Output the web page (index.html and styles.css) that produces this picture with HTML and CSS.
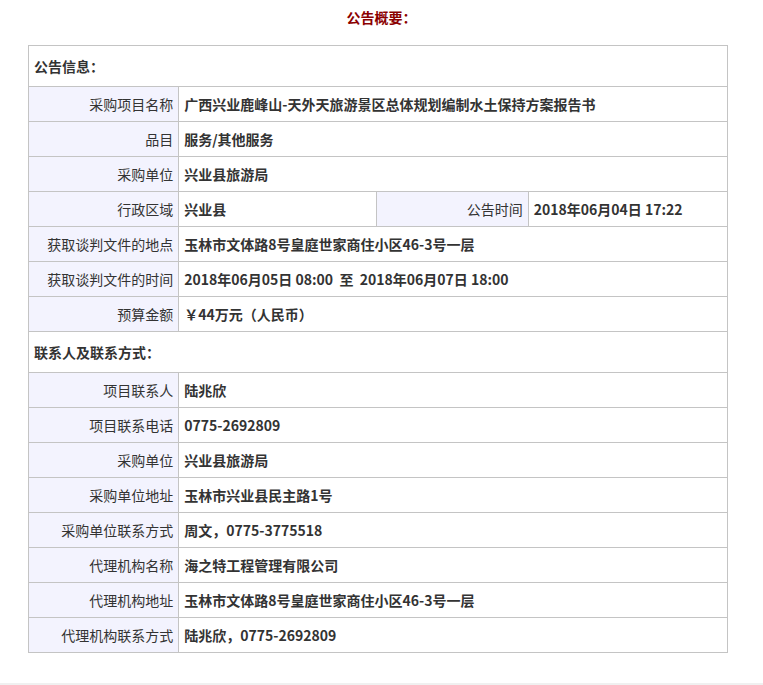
FILE: index.html
```html
<!DOCTYPE html>
<html lang="zh-CN">
<head>
<meta charset="utf-8">
<title>公告概要</title>
<link rel="stylesheet" href="styles.css">
</head>
<body>
<div class="page">
  <h2 class="title">公告概要：</h2>
  <table class="info">
    <colgroup>
      <col class="c1"><col class="c2"><col class="c3"><col class="c4">
    </colgroup>
    <tr class="sec"><td colspan="4">公告信息：</td></tr>
    <tr><th>采购项目名称</th><td colspan="3">广西兴业鹿峰山-天外天旅游景区总体规划编制水土保持方案报告书</td></tr>
    <tr><th>品目</th><td colspan="3">服务/其他服务</td></tr>
    <tr><th>采购单位</th><td colspan="3">兴业县旅游局</td></tr>
    <tr><th>行政区域</th><td>兴业县</td><th>公告时间</th><td>2018年06月04日 17:22</td></tr>
    <tr><th>获取谈判文件的地点</th><td colspan="3">玉林市文体路8号皇庭世家商住小区46-3号一层</td></tr>
    <tr><th>获取谈判文件的时间</th><td colspan="3">2018年06月05日 08:00&nbsp;&nbsp;至&nbsp;&nbsp;2018年06月07日 18:00</td></tr>
    <tr><th>预算金额</th><td colspan="3">￥44万元（人民币）</td></tr>
    <tr class="sec"><td colspan="4">联系人及联系方式：</td></tr>
    <tr><th>项目联系人</th><td colspan="3">陆兆欣</td></tr>
    <tr><th>项目联系电话</th><td colspan="3">0775-2692809</td></tr>
    <tr><th>采购单位</th><td colspan="3">兴业县旅游局</td></tr>
    <tr><th>采购单位地址</th><td colspan="3">玉林市兴业县民主路1号</td></tr>
    <tr><th>采购单位联系方式</th><td colspan="3">周文，0775-3775518</td></tr>
    <tr><th>代理机构名称</th><td colspan="3">海之特工程管理有限公司</td></tr>
    <tr><th>代理机构地址</th><td colspan="3">玉林市文体路8号皇庭世家商住小区46-3号一层</td></tr>
    <tr><th>代理机构联系方式</th><td colspan="3">陆兆欣，0775-2692809</td></tr>
  </table>
</div>
<div class="footer"></div>
</body>
</html>
```
FILE: styles.css
```css
html, body {
  margin: 0;
  padding: 0;
  background: #fff;
}
body {
  font-family: "Noto Sans CJK SC", "Microsoft YaHei", sans-serif;
  font-size: 14px;
  color: #333;
}
.page {
  height: 683px;
  padding-top: 7px;
  box-sizing: border-box;
}
.title {
  margin: 0;
  height: 38px;
  line-height: 20px;
  text-align: center;
  font-size: 14px;
  font-weight: bold;
  color: #8b0000;
}
.info {
  margin-left: 28px;
  width: 700px;
  border-collapse: collapse;
  table-layout: fixed;
}
.c1 { width: 150px; }
.c2 { width: 198px; }
.c3 { width: 151px; }
.c4 { width: 199px; }
.info th, .info td {
  border: 1px solid #c4c4c4;
  height: 35px;
  padding: 0 5px;
  box-sizing: border-box;
  line-height: 20px;
  white-space: nowrap;
}
.info th {
  background: #f3f3fe;
  font-weight: normal;
  text-align: right;
  color: #333;
}
.info td {
  font-weight: bold;
  color: #333;
  text-align: left;
}
.info tr.sec td {
  height: 41px;
  padding-left: 5px;
}
.footer {
  height: 2px;
  background: #f0f0f0;
}
```
